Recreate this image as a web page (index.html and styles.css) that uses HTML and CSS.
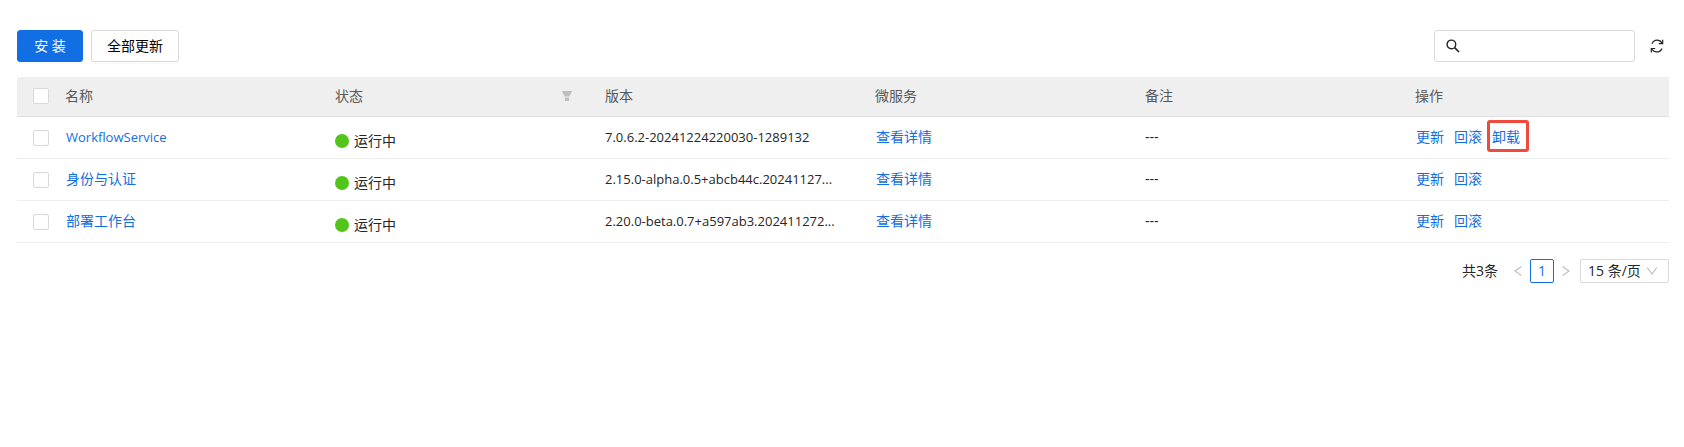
FILE: index.html
```html
<!DOCTYPE html>
<html lang="zh-CN">
  <head>
    <meta charset="UTF-8" />
    <meta name="viewport" content="width=device-width, initial-scale=1.0" />
    <title>服务管理</title>
    <link rel="stylesheet" href="styles.css">
  </head>
  <body>
    <main class="page">
      <div class="toolbar">
        <button type="button" class="btn btn-primary">安 装</button>
        <button type="button" class="btn">全部更新</button>
        <label class="search">
          <svg class="icon" width="14" height="14" viewBox="0 0 14 14" fill="none" stroke="#262626" stroke-width="1.4">
            <circle cx="5.4" cy="5.4" r="4.3" />
            <path d="M8.6 8.6L13 13" stroke-width="1.7" />
          </svg>
          <input type="text" class="search-input" aria-label="搜索" />
        </label>
        <button type="button" class="refresh" aria-label="刷新">
          <svg width="14" height="14" viewBox="0 0 14 14" fill="none" stroke="#262626" stroke-width="1.2">
            <path d="M2 4.8C3 2.4 5 1.2 7.2 1.2C9.2 1.2 10.9 2.2 12 4" />
            <path d="M12.7 0.8V4.7H8.8" />
            <path d="M12 9.4C11 11.8 9 12.9 6.8 12.9C4.8 12.9 3.1 12 2 10.2" />
            <path d="M1.3 13.5V9.5H5.2" />
          </svg>
        </button>
      </div>

      <table class="table">
        <thead>
          <tr>
            <th class="check"><input type="checkbox" aria-label="全选" /></th>
            <th>名称</th>
            <th>
              <div class="th-filter">
                状态
                <svg width="12" height="12" viewBox="0 0 12 12" fill="#bfbfbf">
                  <path d="M0.8 1H11.2L8.3 6.6H3.7Z" />
                  <path d="M3.9 7.4H8.1V10.4Q8.1 11 7.5 11H4.5Q3.9 11 3.9 10.4Z" />
                </svg>
              </div>
            </th>
            <th>版本</th>
            <th>微服务</th>
            <th>备注</th>
            <th>操作</th>
          </tr>
        </thead>
        <tbody>
          <tr>
            <td class="check"><input type="checkbox" aria-label="选择 WorkflowService" /></td>
            <td><a class="link latin" href="#">WorkflowService</a></td>
            <td><div class="status">运行中</div></td>
            <td class="latin">7.0.6.2-20241224220030-1289132</td>
            <td><a class="link" href="#">查看详情</a></td>
            <td>---</td>
            <td>
              <div class="actions">
                <a class="link" href="#">更新</a>
                <a class="link" href="#">回滚</a>
                <a class="link marked" href="#">卸载</a>
              </div>
            </td>
          </tr>
          <tr>
            <td class="check"><input type="checkbox" aria-label="选择 身份与认证" /></td>
            <td><a class="link" href="#">身份与认证</a></td>
            <td><div class="status">运行中</div></td>
            <td class="latin">2.15.0-alpha.0.5+abcb44c.20241127...</td>
            <td><a class="link" href="#">查看详情</a></td>
            <td>---</td>
            <td>
              <div class="actions">
                <a class="link" href="#">更新</a>
                <a class="link" href="#">回滚</a>
              </div>
            </td>
          </tr>
          <tr>
            <td class="check"><input type="checkbox" aria-label="选择 部署工作台" /></td>
            <td><a class="link" href="#">部署工作台</a></td>
            <td><div class="status">运行中</div></td>
            <td class="latin">2.20.0-beta.0.7+a597ab3.202411272...</td>
            <td><a class="link" href="#">查看详情</a></td>
            <td>---</td>
            <td>
              <div class="actions">
                <a class="link" href="#">更新</a>
                <a class="link" href="#">回滚</a>
              </div>
            </td>
          </tr>
        </tbody>
      </table>

      <nav class="pagination" aria-label="分页">
        <span class="total">共3条</span>
        <button type="button" class="page-btn" aria-label="上一页" disabled>
          <svg width="8" height="12" viewBox="0 0 8 12" fill="none" stroke="#bfbfbf" stroke-width="1.2"><path d="M7.4 1.4L1 6L7.4 10.6" /></svg>
        </button>
        <button type="button" class="page-btn active">1</button>
        <button type="button" class="page-btn" aria-label="下一页" disabled>
          <svg width="8" height="12" viewBox="0 0 8 12" fill="none" stroke="#bfbfbf" stroke-width="1.2"><path d="M0.6 1.4L7 6L0.6 10.6" /></svg>
        </button>
        <div class="page-size">
          <select aria-label="每页条数">
            <option>15 条/页</option>
          </select>
          <svg class="arrow" width="12" height="12" viewBox="0 0 12 12" fill="none" stroke="#bfbfbf" stroke-width="1.2"><path d="M1.2 2.6L6 9L10.8 2.6" /></svg>
        </div>
      </nav>
    </main>
  </body>
</html>
```
FILE: styles.css
```css
* {
  box-sizing: border-box;
}

body {
  margin: 0;
  background-color: #fff;
  color: #262626;
  font-family: "Open Sans", "Noto Sans CJK SC", sans-serif;
  font-size: 14px;
  line-height: 22px;
}

button,
input,
select {
  font: inherit;
  color: inherit;
}

.page {
  padding: 30px 15px 16px 17px;
}

.toolbar {
  display: flex;
  align-items: center;
  gap: 8px;
  margin-bottom: 15px;
}

.btn {
  height: 32px;
  padding: 0 15px;
  border: 1px solid #d9d9d9;
  border-radius: 3px;
  background-color: #fff;
  color: #000;
  line-height: 28px;
  box-shadow: 0 2px 0 rgba(0, 0, 0, 0.02);
  cursor: pointer;
}

.btn-primary {
  min-width: 66px;
  border-color: #126ee3;
  background-color: #126ee3;
  color: #fff;
}

.search {
  display: flex;
  align-items: center;
  gap: 8px;
  width: 201px;
  height: 32px;
  margin-left: auto;
  padding: 0 11px;
  border: 1px solid #d9d9d9;
  border-radius: 3px;
}

.search .icon {
  flex: none;
}

.search-input {
  flex: 1;
  min-width: 0;
  padding: 0;
  border: 0;
  outline: 0;
  background: none;
}

.refresh {
  display: flex;
  padding: 6px 5px 6px 7px;
  border: 0;
  background: none;
  cursor: pointer;
}

.table {
  width: 100%;
  table-layout: fixed;
  border-collapse: separate;
  border-spacing: 0;
}

.table th,
.table td {
  padding: 0 16px 2px;
  text-align: left;
  white-space: nowrap;
}

.table th {
  height: 40px;
  border-bottom: 1px solid #dfdfdf;
  background-color: #efefef;
  color: #595959;
  font-weight: normal;
}

.table th:first-child {
  border-top-left-radius: 2px;
}

.table td {
  height: 42px;
  border-bottom: 1px solid #ededed;
}

.table .check {
  width: 32px;
  padding-right: 0;
}

.table td.check {
  padding-bottom: 0;
}

.check input {
  appearance: none;
  display: block;
  width: 16px;
  height: 16px;
  margin: 0;
  border: 1px solid #d9d9d9;
  border-radius: 2px;
  background-color: #fff;
}

.table .latin {
  font-size: 13px;
}

.th-filter {
  display: flex;
  align-items: center;
  justify-content: space-between;
}

.status {
  display: flex;
  align-items: center;
  gap: 5px;
  padding-top: 8px;
}

.status::before {
  content: "";
  width: 14px;
  height: 14px;
  border-radius: 50%;
  background-color: #52c41a;
}

.link {
  padding-left: 1px;
  color: #126ee3;
  text-decoration: none;
}

.actions {
  display: flex;
  gap: 9px;
}

.marked {
  position: relative;
}

/* highlight frame around the uninstall link */
.marked::after {
  content: "";
  position: absolute;
  inset: -6px -9px -4px -4px;
  border: 3px solid #f04a3e;
  border-radius: 3px;
}

.pagination {
  display: flex;
  align-items: center;
  justify-content: flex-end;
  margin-top: 16px;
}

.total {
  margin-right: 8px;
}

.page-btn {
  display: flex;
  align-items: center;
  justify-content: center;
  width: 24px;
  height: 24px;
  padding: 0;
  border: 1px solid transparent;
  border-radius: 2px;
  background: none;
}

.page-btn.active {
  border-color: #126ee3;
  color: #126ee3;
}

.page-size {
  position: relative;
  margin-left: 2px;
}

.page-size select {
  appearance: none;
  display: block;
  width: 89px;
  height: 24px;
  padding: 0 7px;
  border: 1px solid #d9d9d9;
  border-radius: 2px;
  background-color: #fff;
}

.page-size .arrow {
  position: absolute;
  top: 6px;
  right: 11px;
  pointer-events: none;
}
```
